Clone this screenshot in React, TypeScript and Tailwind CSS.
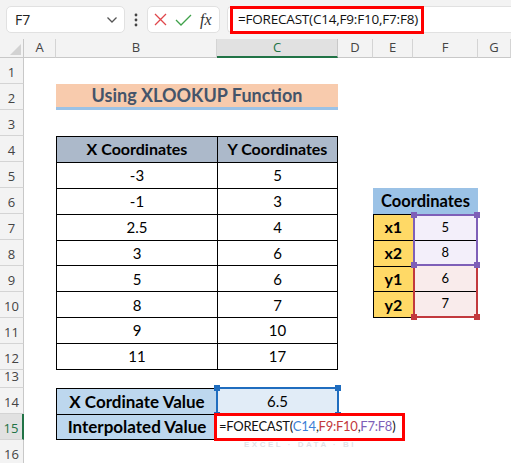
import React from "react";

const X = ["-3", "-1", "2.5", "3", "5", "8", "9", "11"];
const Y = ["5", "3", "4", "6", "6", "7", "10", "17"];

const ROWS = [
  { n: 1, cls: "row-start-2" },
  { n: 2, cls: "row-start-3" },
  { n: 3, cls: "row-start-4" },
  { n: 4, cls: "row-start-5" },
  { n: 5, cls: "row-start-6" },
  { n: 6, cls: "row-start-7" },
  { n: 7, cls: "row-start-8" },
  { n: 8, cls: "row-start-9" },
  { n: 9, cls: "row-start-10" },
  { n: 10, cls: "row-start-11" },
  { n: 11, cls: "row-start-12" },
  { n: 12, cls: "row-start-13" },
  { n: 13, cls: "row-start-14" },
  { n: 14, cls: "row-start-15" },
  { n: 15, cls: "row-start-16" },
  { n: 16, cls: "row-start-17" },
];

const COLS = [
  { l: "A", cls: "col-start-2" },
  { l: "B", cls: "col-start-3" },
  { l: "C", cls: "col-start-4" },
  { l: "D", cls: "col-start-5" },
  { l: "E", cls: "col-start-6" },
  { l: "F", cls: "col-start-7" },
  { l: "G", cls: "col-start-8" },
];

const calibri = "font-['Lato','Liberation_Sans',sans-serif]";
const ui = "font-['Open_Sans','Liberation_Sans',sans-serif]";

function Handle({ pos, color }: { pos: string; color: string }) {
  return <span className={`absolute h-[6px] w-[6px] ${pos} ${color}`} />;
}

function FormulaBar() {
  return (
    <div className={`flex h-[39px] items-center gap-0 bg-[#F3F3F3] pl-[6px] ${ui}`}>
      <div className="flex h-[27px] w-[119px] items-center justify-between rounded-[5px] border border-[#E1E1E1] bg-white pl-[8px] pr-[6px] text-[14px] text-[#222]">
        <span>F7</span>
        <svg width="12" height="8" viewBox="0 0 12 8" fill="none" stroke="#555" strokeWidth="1.3">
          <path d="M1.5 1.5 6 6l4.5-4.5" />
        </svg>
      </div>
      <div className="flex w-[22px] justify-center">
        <svg width="4" height="14" viewBox="0 0 4 14" fill="#444">
          <circle cx="2" cy="2" r="1.4" />
          <circle cx="2" cy="7" r="1.4" />
          <circle cx="2" cy="12" r="1.4" />
        </svg>
      </div>
      <div className="flex h-[27px] w-[73px] items-center gap-[8px] rounded-[5px] border border-[#E1E1E1] bg-white pl-[6px]">
        <svg width="13" height="13" viewBox="0 0 13 13" stroke="#E0474C" strokeWidth="1.3" fill="none">
          <path d="M1 1l11 11M12 1 1 12" />
        </svg>
        <svg width="17" height="12" viewBox="0 0 17 12" stroke="#3FA14A" strokeWidth="1.3" fill="none">
          <path d="M1 6l5 5L16 1" />
        </svg>
        <span className="font-['Liberation_Serif',serif] text-[16px] italic leading-none text-[#333]">fx</span>
      </div>
      <div className="ml-[7px] flex h-[27px] flex-1 items-center rounded-l-[5px] border border-r-0 border-[#E1E1E1] bg-white pl-[2px]">
        <div className="flex h-[28px] w-[194px] items-center border-[3px] border-[#FF0000] pl-[5px] text-[13.5px] tracking-[-0.2px] whitespace-nowrap text-[#111]">
          =FORECAST(C14,F9:F10,F7:F8)
        </div>
      </div>
    </div>
  );
}

export default function App() {
  return (
    <div className="h-[463px] w-[511px] overflow-hidden bg-white">
      <FormulaBar />
      <div className="grid grid-cols-[24px_32px_161px_121px_35px_40px_65px_1fr] grid-rows-[19px_26px_26px_26px_26px_26px_26px_26px_26px_26px_26px_26px_26px_18px_26px_26px_26px]">
        {/* select-all corner */}
        <div className="col-start-1 row-start-1 flex items-end justify-end border-b border-r border-[#C8C8C8] bg-[#F3F3F3] p-[2px]">
          <svg width="11" height="11" viewBox="0 0 11 11">
            <path d="M11 0V11H0Z" fill="#D2D2D2" />
          </svg>
        </div>

        {COLS.map((c) => (
          <div
            key={c.l}
            className={`${c.cls} row-start-1 flex items-center justify-center border-r ${ui} text-[13px] ${
              c.l === "C"
                ? "border-b-2 border-r-[#C8C8C8] border-b-[#217346] bg-[#E1E1E1] text-[#217346]"
                : "border-b border-[#D4D4D4] border-b-[#C8C8C8] bg-[#F3F3F3] text-[#444]"
            }`}
          >
            {c.l}
          </div>
        ))}

        {ROWS.map((r) => (
          <div
            key={r.n}
            className={`${r.cls} col-start-1 flex items-end justify-center border-b pb-[1px] ${ui} text-[13px] ${
              r.n === 15
                ? "border-r-2 border-b-[#D4D4D4] border-r-[#217346] bg-[#E1E1E1] text-[#217346]"
                : "border-r border-b-[#D4D4D4] border-r-[#C8C8C8] bg-[#F3F3F3] text-[#444]"
            }`}
          >
            {r.n}
          </div>
        ))}

        {/* title B2:C2 */}
        <div
          className={`col-span-2 col-start-3 row-start-3 flex items-center justify-center border-b-[3px] border-[#9BC2E6] bg-[#F8CBAD] text-[18px] font-bold text-[#44546A] ${calibri}`}
        >
          Using XLOOKUP Function
        </div>

        {/* data table B4:C12 */}
        <div
          className={`col-span-2 col-start-3 row-span-9 row-start-5 grid grid-cols-[160px_1fr] grid-rows-9 gap-px border border-black bg-black text-[15px] text-black ${calibri}`}
        >
          <div className="flex items-center justify-center bg-[#ACB9CA] text-[16px] font-bold">X Coordinates</div>
          <div className="flex items-center justify-center bg-[#ACB9CA] text-[16px] font-bold">Y Coordinates</div>
          {X.map((x, i) => (
            <React.Fragment key={i}>
              <div className="flex items-center justify-center bg-white">{x}</div>
              <div className="flex items-center justify-center bg-white">{Y[i]}</div>
            </React.Fragment>
          ))}
        </div>

        {/* coordinates E6:F10 */}
        <div className={`col-span-2 col-start-6 row-span-5 row-start-7 flex flex-col ${calibri}`}>
          <div className="flex h-[26px] items-center justify-center bg-[#9BC2E6] text-[16.5px] font-bold text-black">
            Coordinates
          </div>
          <div className="flex flex-1">
            <div className="grid w-[41px] grid-rows-4 gap-px border border-black bg-black text-[16px] font-bold">
              {["x1", "x2", "y1", "y2"].map((l) => (
                <div key={l} className="flex items-center justify-center bg-[#FFD966]">
                  {l}
                </div>
              ))}
            </div>
            <div className="-ml-px flex w-[66px] flex-col text-[13px] text-black">
              <div className="relative flex h-[52px] flex-col border-2 border-[#7E5FB8] bg-[#F3EFFA]">
                <div className="flex flex-1 items-center justify-center border-b border-black">5</div>
                <div className="flex flex-1 items-center justify-center">8</div>
                <Handle pos="-left-[4px] -top-[4px]" color="bg-[#7E5FB8]" />
                <Handle pos="-right-[4px] -top-[4px]" color="bg-[#7E5FB8]" />
                <Handle pos="-left-[4px] -bottom-[4px] z-10" color="bg-[#7E5FB8]" />
                <Handle pos="-right-[4px] -bottom-[4px] z-10" color="bg-[#7E5FB8]" />
              </div>
              <div className="relative flex h-[52px] flex-col border-2 border-t-0 border-[#C2393D] bg-[#F9EBEB]">
                <div className="flex flex-1 items-center justify-center border-b border-black">6</div>
                <div className="flex flex-1 items-center justify-center">7</div>
                <Handle pos="-left-[4px] -bottom-[4px]" color="bg-[#C2393D]" />
                <Handle pos="-right-[4px] -bottom-[4px]" color="bg-[#C2393D]" />
              </div>
            </div>
          </div>
        </div>

        {/* B14:C15 */}
        <div className={`relative col-span-2 col-start-3 row-span-2 row-start-15 ${calibri}`}>
          <div className="grid h-full grid-cols-[160px_1fr] grid-rows-2 gap-px border border-black bg-black text-black">
            <div className="flex items-center justify-center bg-[#BDD7EE] text-[17px] font-bold">X Cordinate Value</div>
            <div className="relative flex items-center justify-center bg-[#E1ECF7] text-[15px] outline-2 outline-[#1F6DBF]">
              6.5
              <Handle pos="-left-[4px] -top-[4px]" color="bg-[#1F6DBF]" />
              <Handle pos="-right-[4px] -top-[4px]" color="bg-[#1F6DBF]" />
              <Handle pos="-left-[4px] -bottom-[4px]" color="bg-[#1F6DBF]" />
              <Handle pos="-right-[4px] -bottom-[4px]" color="bg-[#1F6DBF]" />
            </div>
            <div className="flex items-center justify-center bg-[#BDD7EE] text-[17px] font-bold">Interpolated Value</div>
            <div className="border-l-2 border-[#217346] bg-white" />
          </div>
          {/* edit-mode formula spilling out of C15 with red annotation */}
          <div className="absolute left-[158px] top-[25px] z-20 flex h-[28px] w-[191px] items-center overflow-hidden border-[3px] border-[#FF0000] bg-white pl-[2px] text-[13px] tracking-[-0.25px] whitespace-nowrap">
            <span className="text-[#111]">=FORECAST(</span>
            <span className="text-[#3C7FD6]">C14</span>
            <span className="text-[#111]">,</span>
            <span className="text-[#C2393D]">F9:F10</span>
            <span className="text-[#111]">,</span>
            <span className="text-[#7E5FB8]">F7:F8</span>
            <span className="text-[#111]">)</span>
          </div>
          <div className="absolute left-[188px] top-[51px] z-30 font-['Liberation_Sans',sans-serif] text-[8px] font-bold tracking-[2.5px] whitespace-nowrap text-[#C9CED6]/60">
            EXCEL · DATA · BI
          </div>
        </div>
      </div>
    </div>
  );
}
